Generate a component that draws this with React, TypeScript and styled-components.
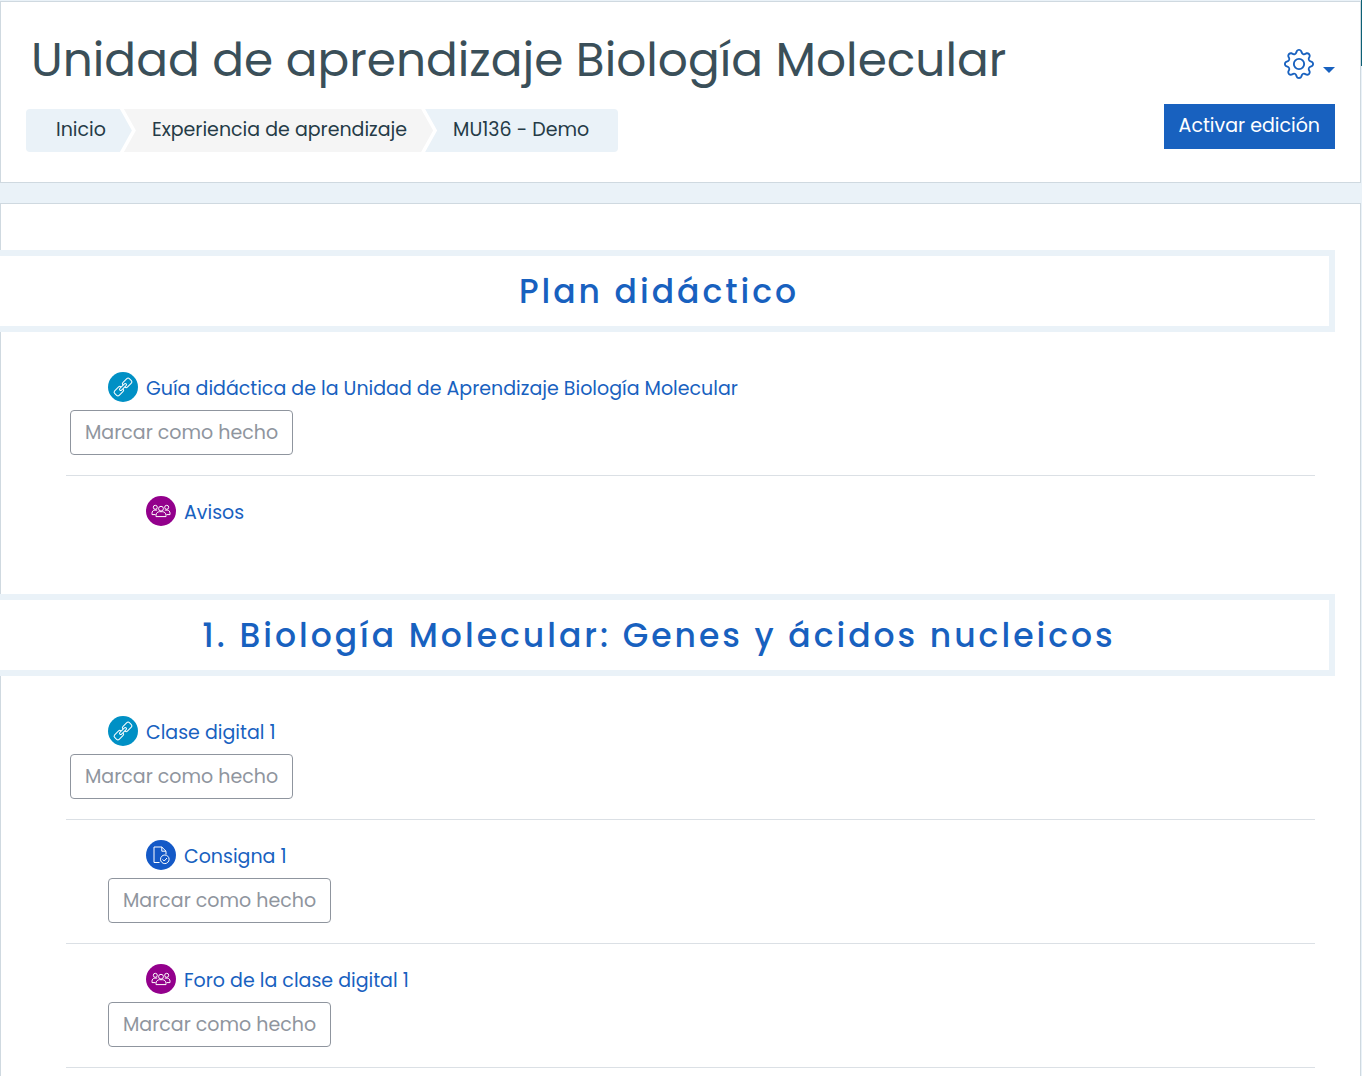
import React from "react";
import styled, { createGlobalStyle } from "styled-components";
import { BsGear } from "react-icons/bs";

const color = {
  blue: "#1861bf",
  page: "#eaf2f8",
  line: "#cfd9e0",
  rule: "#dbe0e5",
  ink: "#3a4f59",
  crumb: "#253b47",
  muted: "#8f959e",
};

const GlobalStyle = createGlobalStyle`
  *, *::before, *::after { box-sizing: border-box; }
  body {
    margin: 0;
    background: ${color.page};
    font-family: Poppins, Inter, "Open Sans", sans-serif;
    font-size: 19px;
    line-height: 30px;
    color: ${color.ink};
  }
`;

const Page = styled.div`
  position: relative;
  display: flex;
  flex-direction: column;
  gap: 20px;
  min-height: 100vh;
  padding: 1px 1px 0 0;
  overflow: hidden;
`;

const DrawerEdge = styled.div`
  position: absolute;
  top: 0;
  right: 0;
  width: 1px;
  height: 66px;
  background: #0c6075;
`;

const HeaderCard = styled.header`
  display: flex;
  justify-content: space-between;
  padding: 24px 25px 30px;
  background: #fff;
  border: 1px solid ${color.line};
`;

const HeaderMain = styled.div`
  display: flex;
  flex-direction: column;
  align-items: flex-start;
  gap: 15px;
`;

const Title = styled.h1`
  margin: 0;
  padding-left: 5px;
  font-size: 47px;
  line-height: 68px;
  font-weight: 400;
  white-space: nowrap;
`;

const Crumbs = styled.ol`
  display: flex;
  margin: 0;
  padding: 0;
  list-style: none;
  border-radius: 4px;
  overflow: hidden;
`;

const Crumb = styled.li<{ $fill: string; $first?: boolean; $last?: boolean }>`
  height: 43px;
  margin-left: ${(p) => (p.$first ? 0 : "-8px")};
  padding: 6px ${(p) => (p.$last ? 29 : 26)}px 0 ${(p) => (p.$first ? 30 : 28)}px;
  line-height: 30px;
  background: ${(p) => p.$fill};
  clip-path: polygon(
    0 0,
    ${(p) => (p.$last ? "100%" : "calc(100% - 12px)")} 0,
    100% 50%,
    ${(p) => (p.$last ? "100%" : "calc(100% - 12px)")} 100%,
    0 100%,
    ${(p) => (p.$first ? "0" : "12px")} 50%
  );
`;

const CrumbLink = styled.a`
  color: ${color.crumb};
  text-decoration: none;
`;

const HeaderActions = styled.div`
  display: flex;
  flex-direction: column;
  align-items: flex-end;
  justify-content: flex-end;
  gap: 25px;
  padding-bottom: 3px;
`;

const GearButton = styled.button`
  display: flex;
  align-items: center;
  gap: 9px;
  padding: 0;
  border: 0;
  background: none;
  color: ${color.blue};
`;

const Caret = styled.span`
  margin-top: 12px;
  border: 6px solid transparent;
  border-top-color: ${color.blue};
  border-bottom: 0;
`;

const EditButton = styled.button`
  height: 45px;
  padding: 0 15px 2px;
  border: 0;
  background: ${color.blue};
  color: #fff;
  font: inherit;
`;

const CourseCard = styled.main`
  flex: 1;
  padding: 46px 25px 0 0;
  background: #fff;
  border: 1px solid ${color.line};
  border-bottom: 0;
`;

const SectionTitle = styled.h2`
  margin: 0 0 0 -18px;
  height: 82px;
  border: 6px solid ${color.page};
  background: #fff;
  color: ${color.blue};
  font-size: 33px;
  line-height: 72px;
  font-weight: 500;
  letter-spacing: 3px;
  text-align: center;
`;

const Activities = styled.ul`
  margin: 0 20px 0 65px;
  padding: 20px 0 48px;
  list-style: none;
`;

const Activity = styled.li<{ $indent?: boolean }>`
  padding: 20px 0 20px ${(p) => (p.$indent ? 42 : 4)}px;
  border-bottom: 1px solid ${color.rule};

  ${Activities} &:last-child:not(:has(button)) {
    border-bottom: 0;
  }
`;

const ActivityLink = styled.a`
  display: flex;
  align-items: center;
  gap: 8px;
  width: fit-content;
  height: 30px;
  margin-left: 38px;
  color: ${color.blue};
  text-decoration: none;
`;

const ActivityName = styled.span`
  padding-top: 4px;
`;

const Badge = styled.span<{ $fill: string }>`
  display: grid;
  place-items: center;
  width: 30px;
  height: 30px;
  border-radius: 50%;
  background: ${(p) => p.$fill};
`;

const DoneButton = styled.button`
  display: block;
  height: 45px;
  margin-top: 8px;
  padding: 0 14px;
  border: 1px solid ${color.muted};
  border-radius: 4px;
  background: #fff;
  color: ${color.muted};
  font: inherit;
`;

type Kind = "url" | "forum" | "assign";

const fills: Record<Kind, string> = {
  url: "#0090c5",
  forum: "#93008c",
  assign: "#1459c7",
};

const drawings: Record<Kind, React.ReactNode> = {
  url: (
    <g transform="rotate(-45 15 15)">
      <path d="M13.6 13.4c0-1-.6-1.6-1.6-1.6H6.4c-1 0-1.8.8-1.8 1.8v2.8c0 1 .8 1.8 1.8 1.8H12c1 0 1.6-.6 1.6-1.6" />
      <path d="M16.4 13.4c0-1 .6-1.6 1.6-1.6h5.6c1 0 1.8.8 1.8 1.8v2.8c0 1-.8 1.8-1.8 1.8H18c-1 0-1.6-.6-1.6-1.6" />
      <rect x="10.6" y="13.8" width="8.8" height="2.4" rx="1.2" />
    </g>
  ),
  forum: (
    <>
      <circle cx="9.3" cy="11.3" r="2" />
      <circle cx="20.7" cy="11.3" r="2" />
      <circle cx="15" cy="12.7" r="2.4" />
      <path d="M10 20.6v-1.3c0-2.2 1.7-3.6 3.4-3.6h3.2c1.7 0 3.4 1.4 3.4 3.6v1.3z" />
      <path d="M9.5 18.6H6v-1.4c0-1.8 1.2-3.1 2.8-3.1h2.4M20.5 18.6H24v-1.4c0-1.8-1.2-3.1-2.8-3.1h-2.4" />
    </>
  ),
  assign: (
    <>
      <path d="M13.5 22.5H8V7h7.8l4.2 4.2v3.2M15.8 7v4.2H20" />
      <circle cx="18.8" cy="19.3" r="4.3" />
      <path d="M16.6 19.4l1.6 1.6 2.8-3" />
    </>
  ),
};

function ActivityIcon({ kind }: { kind: Kind }) {
  return (
    <Badge $fill={fills[kind]}>
      <svg width="30" height="30" viewBox="0 0 30 30" fill="none" stroke="#fff" strokeWidth="1" aria-hidden="true">
        {drawings[kind]}
      </svg>
    </Badge>
  );
}

interface Item {
  kind: Kind;
  name: string;
  indent?: boolean;
  completion?: boolean;
}

const sections: { title: string; items: Item[] }[] = [
  {
    title: "Plan didáctico",
    items: [
      { kind: "url", name: "Guía didáctica de la Unidad de Aprendizaje Biología Molecular", completion: true },
      { kind: "forum", name: "Avisos", indent: true },
    ],
  },
  {
    title: "1. Biología Molecular: Genes y ácidos nucleicos",
    items: [
      { kind: "url", name: "Clase digital 1", completion: true },
      { kind: "assign", name: "Consigna 1", indent: true, completion: true },
      { kind: "forum", name: "Foro de la clase digital 1", indent: true, completion: true },
    ],
  },
];

export default function App() {
  return (
    <>
      <GlobalStyle />
      <Page>
        <HeaderCard>
          <HeaderMain>
            <Title>Unidad de aprendizaje Biología Molecular</Title>
            <nav aria-label="Ruta">
              <Crumbs>
                <Crumb $fill={color.page} $first>
                  <CrumbLink href="#inicio">Inicio</CrumbLink>
                </Crumb>
                <Crumb $fill="#f5f5f5">
                  <CrumbLink href="#experiencia">Experiencia de aprendizaje</CrumbLink>
                </Crumb>
                <Crumb $fill={color.page} $last>
                  <CrumbLink href="#curso">MU136 - Demo</CrumbLink>
                </Crumb>
              </Crumbs>
            </nav>
          </HeaderMain>
          <HeaderActions>
            <GearButton type="button" aria-label="Acciones">
              <BsGear size={30} />
              <Caret />
            </GearButton>
            <EditButton type="button">Activar edición</EditButton>
          </HeaderActions>
        </HeaderCard>
        <CourseCard>
          {sections.map((section) => (
            <section key={section.title}>
              <SectionTitle>{section.title}</SectionTitle>
              <Activities>
                {section.items.map((item) => (
                  <Activity key={item.name} $indent={item.indent}>
                    <ActivityLink href="#actividad">
                      <ActivityIcon kind={item.kind} />
                      <ActivityName>{item.name}</ActivityName>
                    </ActivityLink>
                    {item.completion && <DoneButton type="button">Marcar como hecho</DoneButton>}
                  </Activity>
                ))}
              </Activities>
            </section>
          ))}
        </CourseCard>
        <DrawerEdge />
      </Page>
    </>
  );
}
